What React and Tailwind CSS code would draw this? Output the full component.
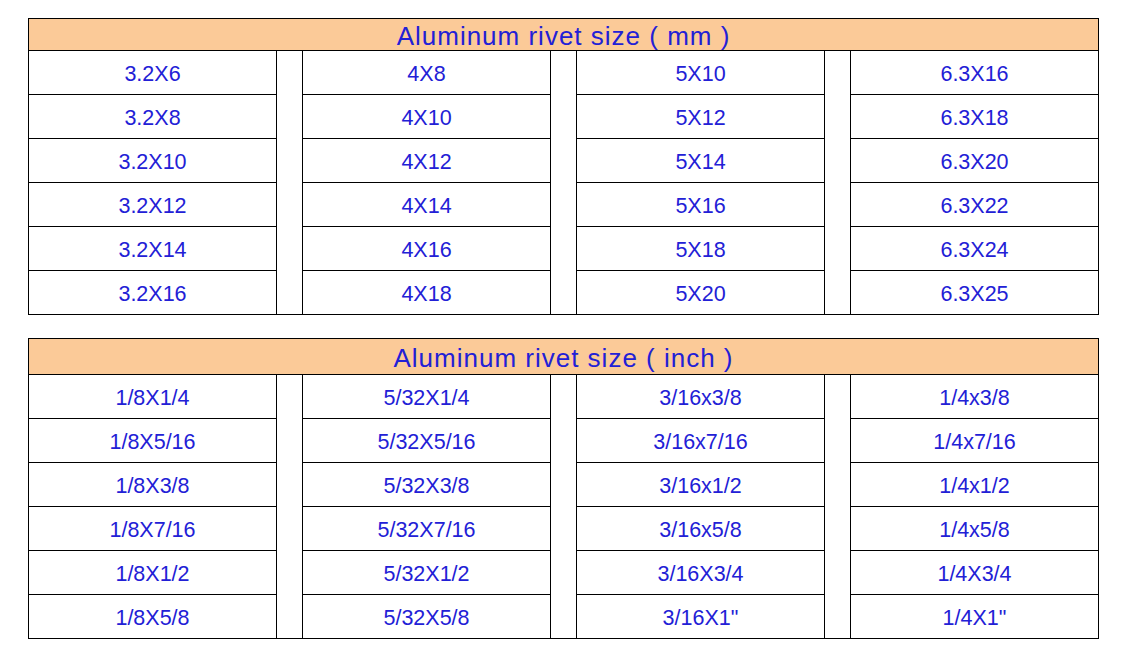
import React from "react";

const mmCols = [
  ["3.2X6", "3.2X8", "3.2X10", "3.2X12", "3.2X14", "3.2X16"],
  ["4X8", "4X10", "4X12", "4X14", "4X16", "4X18"],
  ["5X10", "5X12", "5X14", "5X16", "5X18", "5X20"],
  ["6.3X16", "6.3X18", "6.3X20", "6.3X22", "6.3X24", "6.3X25"],
];

const inchCols = [
  ["1/8X1/4", "1/8X5/16", "1/8X3/8", "1/8X7/16", "1/8X1/2", "1/8X5/8"],
  ["5/32X1/4", "5/32X5/16", "5/32X3/8", "5/32X7/16", "5/32X1/2", "5/32X5/8"],
  ["3/16x3/8", "3/16x7/16", "3/16x1/2", "3/16x5/8", "3/16X3/4", '3/16X1"'],
  ["1/4x3/8", "1/4x7/16", "1/4x1/2", "1/4x5/8", "1/4X3/4", '1/4X1"'],
];

function SizeTable({ title, cols, headerH }) {
  return (
    <div className="w-[1071px]">
      <div
        className={`${headerH} flex items-center justify-center border border-black bg-[#fbca98] text-[26px] tracking-[1px] leading-none text-[#2220d6] pt-[2px]`}
      >
        {title}
      </div>
      <div className="flex gap-[25px] border-b border-black">
        {cols.map((col, i) => (
          <div key={i} className="w-[249px] border-x border-black">
            {col.map((size) => (
              <div
                key={size}
                className="h-[44px] border-b border-black last:h-[43px] last:border-b-0 flex items-center justify-center pt-[3px] text-[21.5px] text-[#2220d6]"
              >
                {size}
              </div>
            ))}
          </div>
        ))}
      </div>
    </div>
  );
}

export default function App() {
  return (
    <div
      className="w-[1128px] h-[664px] bg-white pl-[28px] pt-[18px] flex flex-col gap-[23px]"
      style={{ fontFamily: '"Liberation Sans", Arial, sans-serif' }}
    >
      <SizeTable title="Aluminum rivet size ( mm )" cols={mmCols} headerH="h-[33px]" />
      <SizeTable title="Aluminum rivet size ( inch )" cols={inchCols} headerH="h-[37px]" />
    </div>
  );
}
